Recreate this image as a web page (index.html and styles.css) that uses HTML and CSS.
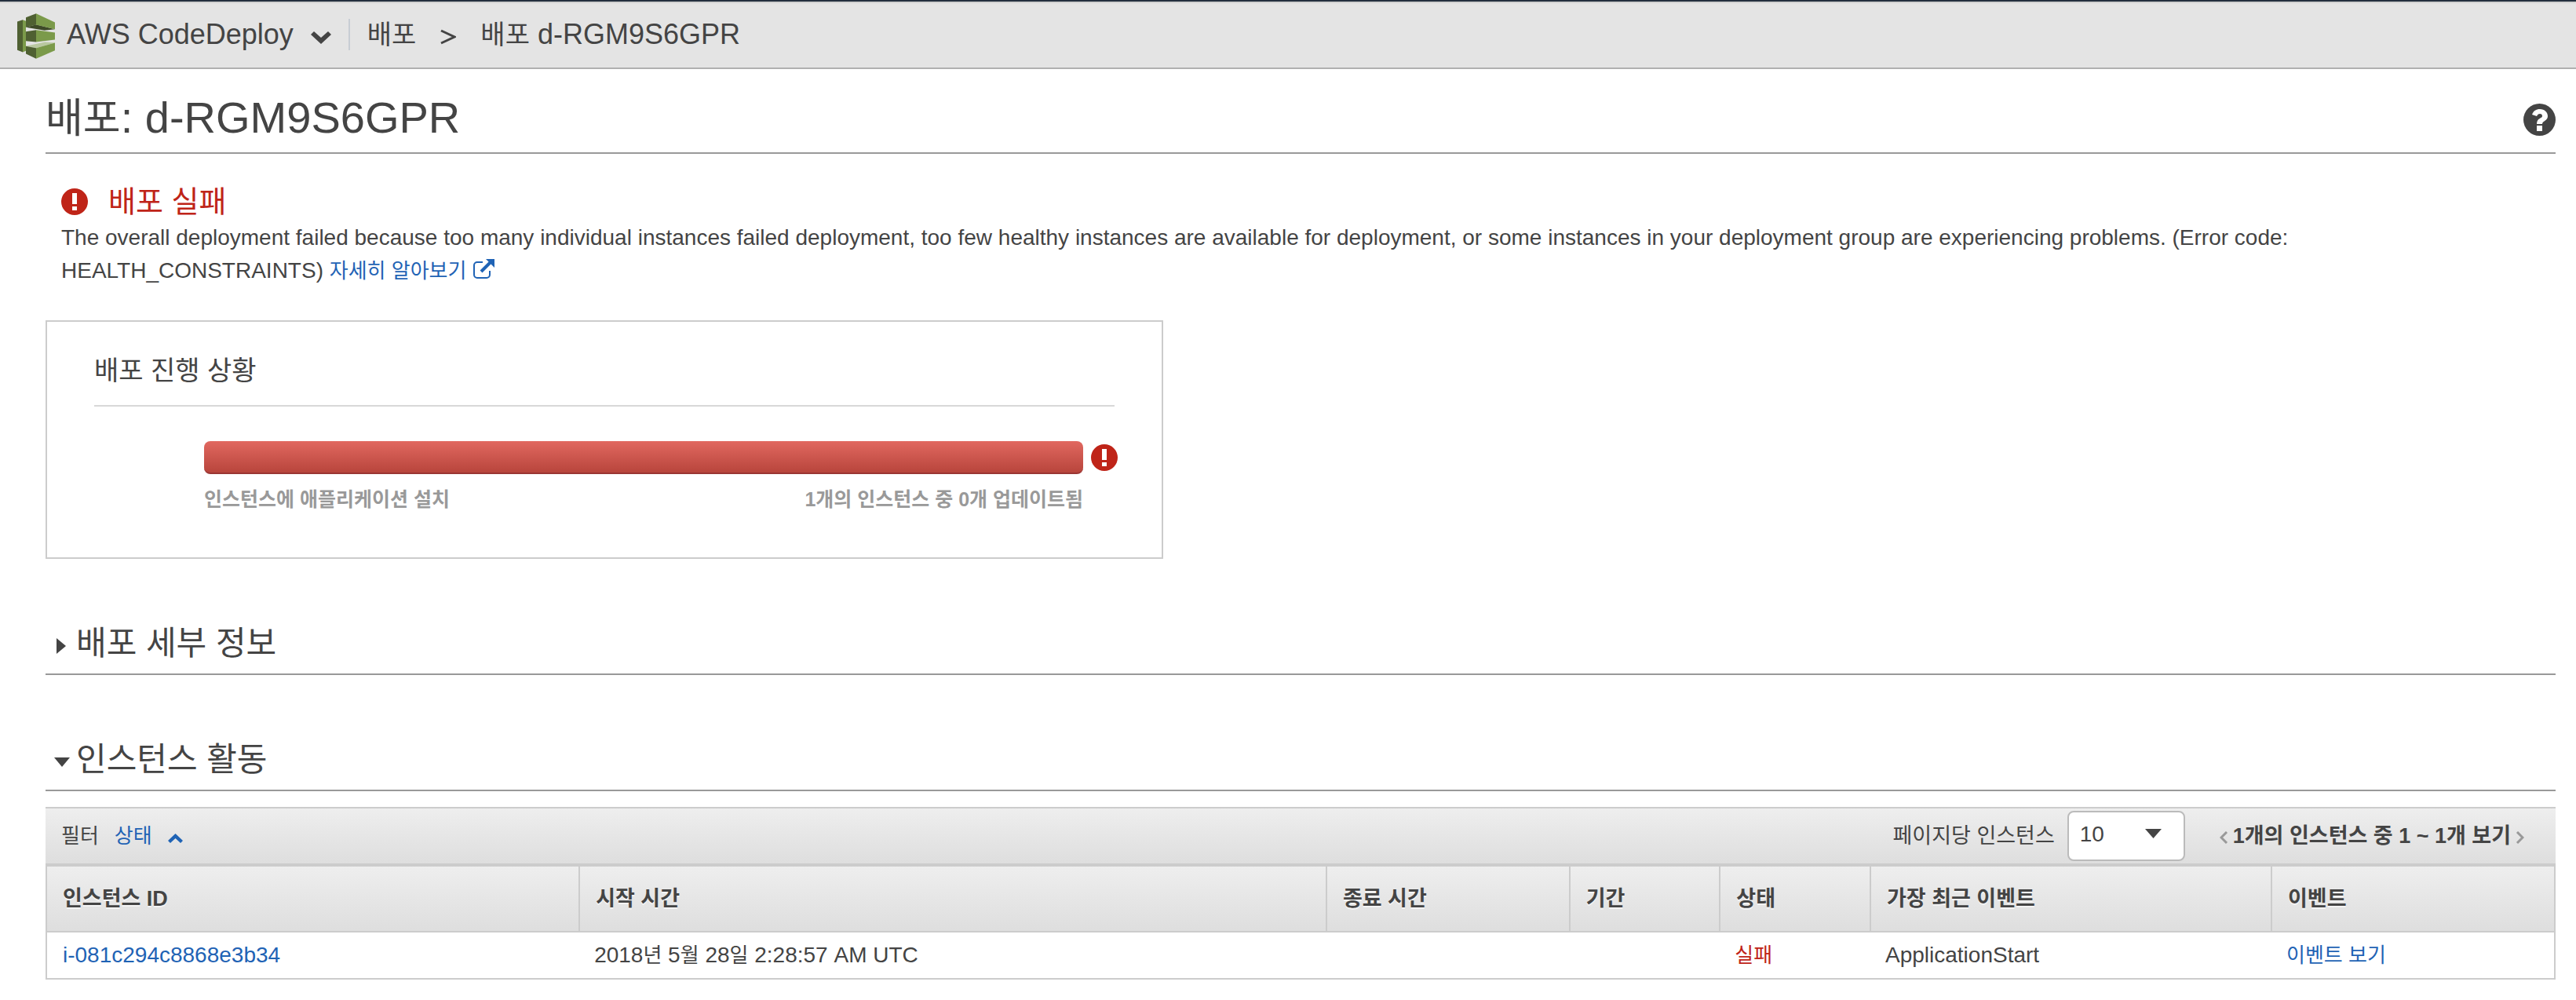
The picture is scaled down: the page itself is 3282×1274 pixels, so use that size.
FILE: index.html
```html
<!DOCTYPE html>
<html lang="ko">
<head>
<meta charset="utf-8">
<meta name="viewport" content="width=device-width, initial-scale=1">
<title>AWS CodeDeploy - d-RGM9S6GPR</title>
<link rel="stylesheet" href="styles.css">
</head>
<body>
<header class="topbar">
  <svg class="logo" viewBox="66 53 144 173" aria-hidden="true">
    <path fill="#4f6032" d="M66 84 87 77V201L66 193Z"/>
    <path fill="#7b9a4a" d="M87 77 99 82V196L87 201Z"/>
    <path fill="#3e4a28" d="M99 106 138 95 210 113 170 118Z"/>
    <path fill="#4f6032" d="M99 68 138 53V96L99 106Z"/>
    <path fill="#7b9a4a" d="M138 53 210 87V113L138 96Z"/>
    <path fill="#4f6032" d="M99 122 138 116V162L99 158Z"/>
    <path fill="#7b9a4a" d="M138 116 210 126V153L138 162Z"/>
    <path fill="#b9c8a0" d="M99 178 172 162 210 165 138 185Z"/>
    <path fill="#4f6032" d="M99 178 138 185V226L99 207Z"/>
    <path fill="#7b9a4a" d="M138 185 210 165V194L138 226Z"/>
  </svg>
  <button class="service" type="button">AWS CodeDeploy
    <svg class="service-caret" viewBox="0 0 26 16" aria-hidden="true"><path fill="#444" d="M4 0 13 8 22 0 26 4 13 16 0 4Z"/></svg>
  </button>
  <nav class="crumbs" aria-label="breadcrumb">
    <a href="#"><span class="ko">배포</span></a>
    <svg class="crumb-sep" viewBox="0 0 20 20" aria-hidden="true"><path d="M1 2 18 10 1 18" fill="none" stroke="#444" stroke-width="3"/></svg>
    <span><span class="ko">배포</span> d-RGM9S6GPR</span>
  </nav>
</header>

<main>
  <div class="title-row">
    <h1><span class="ko">배포</span>: d-RGM9S6GPR</h1>
    <button class="help" type="button" aria-label="도움말">
      <svg viewBox="0 0 41 41" aria-hidden="true"><circle cx="20.500" cy="20.500" r="20.500" fill="#444"/><path fill="#fff" d="M11 14C13 9 16 7 21 7c6 0 10 4 10 9 0 6-7 6-7 10H17c0-8 7-7 7-10 0-2-1-3-3-3s-3 1-4 3ZM17 28h7v7h-7Z"/></svg>
    </button>
  </div>

  <section class="alert">
    <h2>
      <svg class="bang" viewBox="0 0 34 34" aria-hidden="true"><circle cx="17" cy="17" r="17" fill="#bf2418"/><path fill="#fff" d="M14 6h6v14h-6ZM14 23h6v5h-6Z"/></svg>
      배포 실패
    </h2>
    <p>The overall deployment failed because too many individual instances failed deployment, too few healthy instances are available for deployment, or some instances in your deployment group are experiencing problems. (Error code: HEALTH_CONSTRAINTS) <a class="ko-text" href="#">자세히 알아보기 <svg class="external" viewBox="0 0 28 26" aria-hidden="true"><path d="M13 4H6a4 4 0 0 0-4 4v12a4 4 0 0 0 4 4h12a4 4 0 0 0 4-4V15" fill="none" stroke="#1f63b5" stroke-width="2"/><path d="M11 16 23 4" stroke="#1f63b5" stroke-width="4"/><path fill="#1f63b5" d="M17 0H28V11Z"/></svg></a></p>
  </section>

  <section class="progress-card">
    <h3>배포 진행 상황</h3>
    <div class="progress">
      <div class="bar"></div>
      <svg class="bang" viewBox="0 0 34 34" aria-hidden="true"><circle cx="17" cy="17" r="17" fill="#bf2418"/><path fill="#fff" d="M14 6h6v14h-6ZM14 23h6v5h-6Z"/></svg>
      <div class="labels"><span>인스턴스에 애플리케이션 설치</span><span>1개의 인스턴스 중 0개 업데이트됨</span></div>
    </div>
  </section>

  <section class="fold">
    <h2><button type="button" aria-expanded="false"><svg viewBox="0 0 20 20" aria-hidden="true"><path fill="#444" d="M3 0 15 10 3 20Z"/></svg>배포 세부 정보</button></h2>
  </section>

  <section class="fold">
    <h2><button type="button" aria-expanded="true"><svg viewBox="0 0 20 20" aria-hidden="true"><path fill="#444" d="M0 4H20L10 16Z"/></svg>인스턴스 활동</button></h2>
    <div class="toolbar">
      <span>필터</span>
      <button class="filter" type="button">상태
        <svg viewBox="0 0 19 12" aria-hidden="true"><path fill="#1f63b5" d="M0 9 9.500 0 19 9 16 12 9.500 6 3 12Z"/></svg>
      </button>
      <label class="per-page-label" for="per-page">페이지당 인스턴스</label>
      <span class="per-page">
        <select id="per-page"><option>10</option><option>25</option><option>50</option></select>
        <svg viewBox="0 0 21 12" aria-hidden="true"><path fill="#444" d="M0 0H21L10.500 12Z"/></svg>
      </span>
      <div class="pager">
        <button type="button" aria-label="이전"><svg viewBox="0 0 11 16" aria-hidden="true"><path d="M9 1 2 8 9 15" fill="none" stroke="#999" stroke-width="3"/></svg></button>
        <strong>1개의 인스턴스 중 1 ~ 1개 보기</strong>
        <button type="button" aria-label="다음"><svg viewBox="0 0 11 16" aria-hidden="true"><path d="M2 1 9 8 2 15" fill="none" stroke="#999" stroke-width="3"/></svg></button>
      </div>
    </div>
    <table>
      <colgroup><col class="c-id"><col class="c-start"><col class="c-end"><col class="c-short"><col class="c-short"><col class="c-last"><col></colgroup>
      <thead>
        <tr><th>인스턴스 ID</th><th>시작 시간</th><th>종료 시간</th><th>기간</th><th>상태</th><th>가장 최근 이벤트</th><th>이벤트</th></tr>
      </thead>
      <tbody>
        <tr>
          <td><a href="#">i-081c294c8868e3b34</a></td>
          <td>2018<span class="ko-text">년</span> 5<span class="ko-text">월</span> 28<span class="ko-text">일</span> 2:28:57 AM UTC</td>
          <td></td>
          <td></td>
          <td class="failed">실패</td>
          <td>ApplicationStart</td>
          <td><a class="ko-text" href="#">이벤트 보기</a></td>
        </tr>
      </tbody>
    </table>
  </section>
</main>
</body>
</html>
```

FILE: styles.css
```css
* { box-sizing: border-box; }

body {
  margin: 0;
  background: #fff;
  color: #444;
  font: 28px/42px "Liberation Sans", "Noto Sans CJK KR", sans-serif;
}

h1, h2, h3, p { margin: 0; font-weight: 400; }
a { color: #1f63b5; text-decoration: none; }
svg { display: block; flex: none; }
button {
  display: flex;
  align-items: center;
  padding: 0;
  border: 0;
  background: none;
  color: inherit;
  font: inherit;
  cursor: pointer;
}

/* Hangul is set a little smaller than the Latin text beside it */
.ko, .ko-text { line-height: 1; }
.ko-text { font-size: 26px; }

/* service bar */
.topbar {
  display: flex;
  align-items: center;
  height: 88px;
  padding: 0 22px;
  border-top: 2px solid #232f3e;
  border-bottom: 2px solid #b0b0b0;
  background: #e4e4e4;
  box-shadow: inset 0 2px #d0d0d0;
  font-size: 36px;
  line-height: 40px;
}
.topbar .ko { font-size: 34px; }
.logo { width: 48px; height: 58px; margin: 4px 15px 0 0; }
.service { gap: 22px; padding-right: 22px; }
.service-caret { width: 26px; height: 16px; margin-top: 8px; }
.crumbs {
  display: flex;
  align-items: center;
  gap: 31px;
  padding-left: 22px;
  border-left: 2px solid #c8cdd4;
}
.crumbs a { color: inherit; }
.crumb-sep { width: 20px; height: 20px; margin-top: 6px; }

main { padding: 0 26px 26px 58px; }

.title-row {
  display: flex;
  align-items: center;
  justify-content: space-between;
  padding-top: 18px;
  border-bottom: 2px solid #999;
}
h1 { font-size: 56px; line-height: 88px; }
h1 .ko { font-size: 52px; }
.help svg { width: 41px; height: 41px; margin-top: 4px; }

.bang { width: 34px; height: 34px; }

.alert { padding: 36px 0 0 20px; }
.alert h2 {
  display: flex;
  align-items: center;
  gap: 26px;
  color: #bf2418;
  font-size: 38px;
  line-height: 50px;
}
.external { display: inline-block; width: 28px; height: 26px; vertical-align: -2px; }

.progress-card {
  width: 1424px;
  max-width: 100%;
  margin-top: 42px;
  padding: 40px 60px 56px;
  border: 2px solid #ccc;
}
.progress-card h3 {
  padding-bottom: 22px;
  border-bottom: 2px solid #d8d8d8;
  font-size: 34px;
  line-height: 44px;
}
.progress {
  display: grid;
  grid-template-columns: 1fr 34px;
  align-items: center;
  gap: 14px 10px;
  margin: 44px -4px 0 140px;
}
.bar {
  height: 42px;
  border-bottom: 2px solid #9a3634;
  border-radius: 8px;
  background: linear-gradient(#e16860, #b8453c);
}
.labels {
  display: flex;
  justify-content: space-between;
  color: #999;
  font-size: 25px;
  font-weight: 700;
  line-height: 36px;
}

.fold { margin-top: 86px; }
.fold h2 {
  padding: 0 0 16px 11px;
  border-bottom: 2px solid #999;
  font-size: 42px;
  line-height: 44px;
}
.fold h2 svg { width: 20px; height: 20px; margin-top: 6px; }
.fold h2 button { gap: 8px; }

.toolbar {
  display: flex;
  align-items: center;
  height: 74px;
  margin-top: 20px;
  padding: 0 40px 0 20px;
  border-top: 2px solid #ccc;
  border-bottom: 2px solid #ccc;
  background: linear-gradient(#eee, #dedede);
  font-size: 26px;
}
.filter { gap: 20px; margin-left: 20px; color: #1f63b5; }
.filter svg { width: 19px; height: 12px; margin-top: 6px; }
.per-page-label { margin-left: auto; font-size: 27px; }
.per-page { display: grid; align-items: center; margin: 0 44px 0 16px; }
.per-page > * { grid-area: 1 / 1; }
.per-page select {
  width: 150px;
  height: 64px;
  padding: 0 14px 6px;
  border: 2px solid #bbb;
  border-radius: 8px;
  appearance: none;
  background: #fff;
  color: #444;
  font: 28px "Liberation Sans", sans-serif;
}
.per-page svg {
  justify-self: end;
  width: 21px;
  height: 12px;
  margin: 0 30px 6px 0;
  pointer-events: none;
}
.pager { display: flex; align-items: center; gap: 6px; font-size: 27px; }
.pager svg { width: 11px; height: 16px; margin-top: 4px; }

table {
  width: 100%;
  table-layout: fixed;
  border-spacing: 0;
  border: 2px solid #ccc;
}
.c-id { width: 21.2%; }
.c-start { width: 29.8%; }
.c-end { width: 9.7%; }
.c-short { width: 6%; }
.c-last { width: 16%; }
th, td { padding: 0 20px; text-align: left; }
th {
  height: 84px;
  border-bottom: 2px solid #ccc;
  background: linear-gradient(#eee, #dedede);
  font-size: 27px;
  text-shadow: 0 2px #f4f4f4;
}
th + th { border-left: 2px solid #ccc; }
td { height: 58px; }
.failed { color: #bf2418; font-size: 26px; }
```
